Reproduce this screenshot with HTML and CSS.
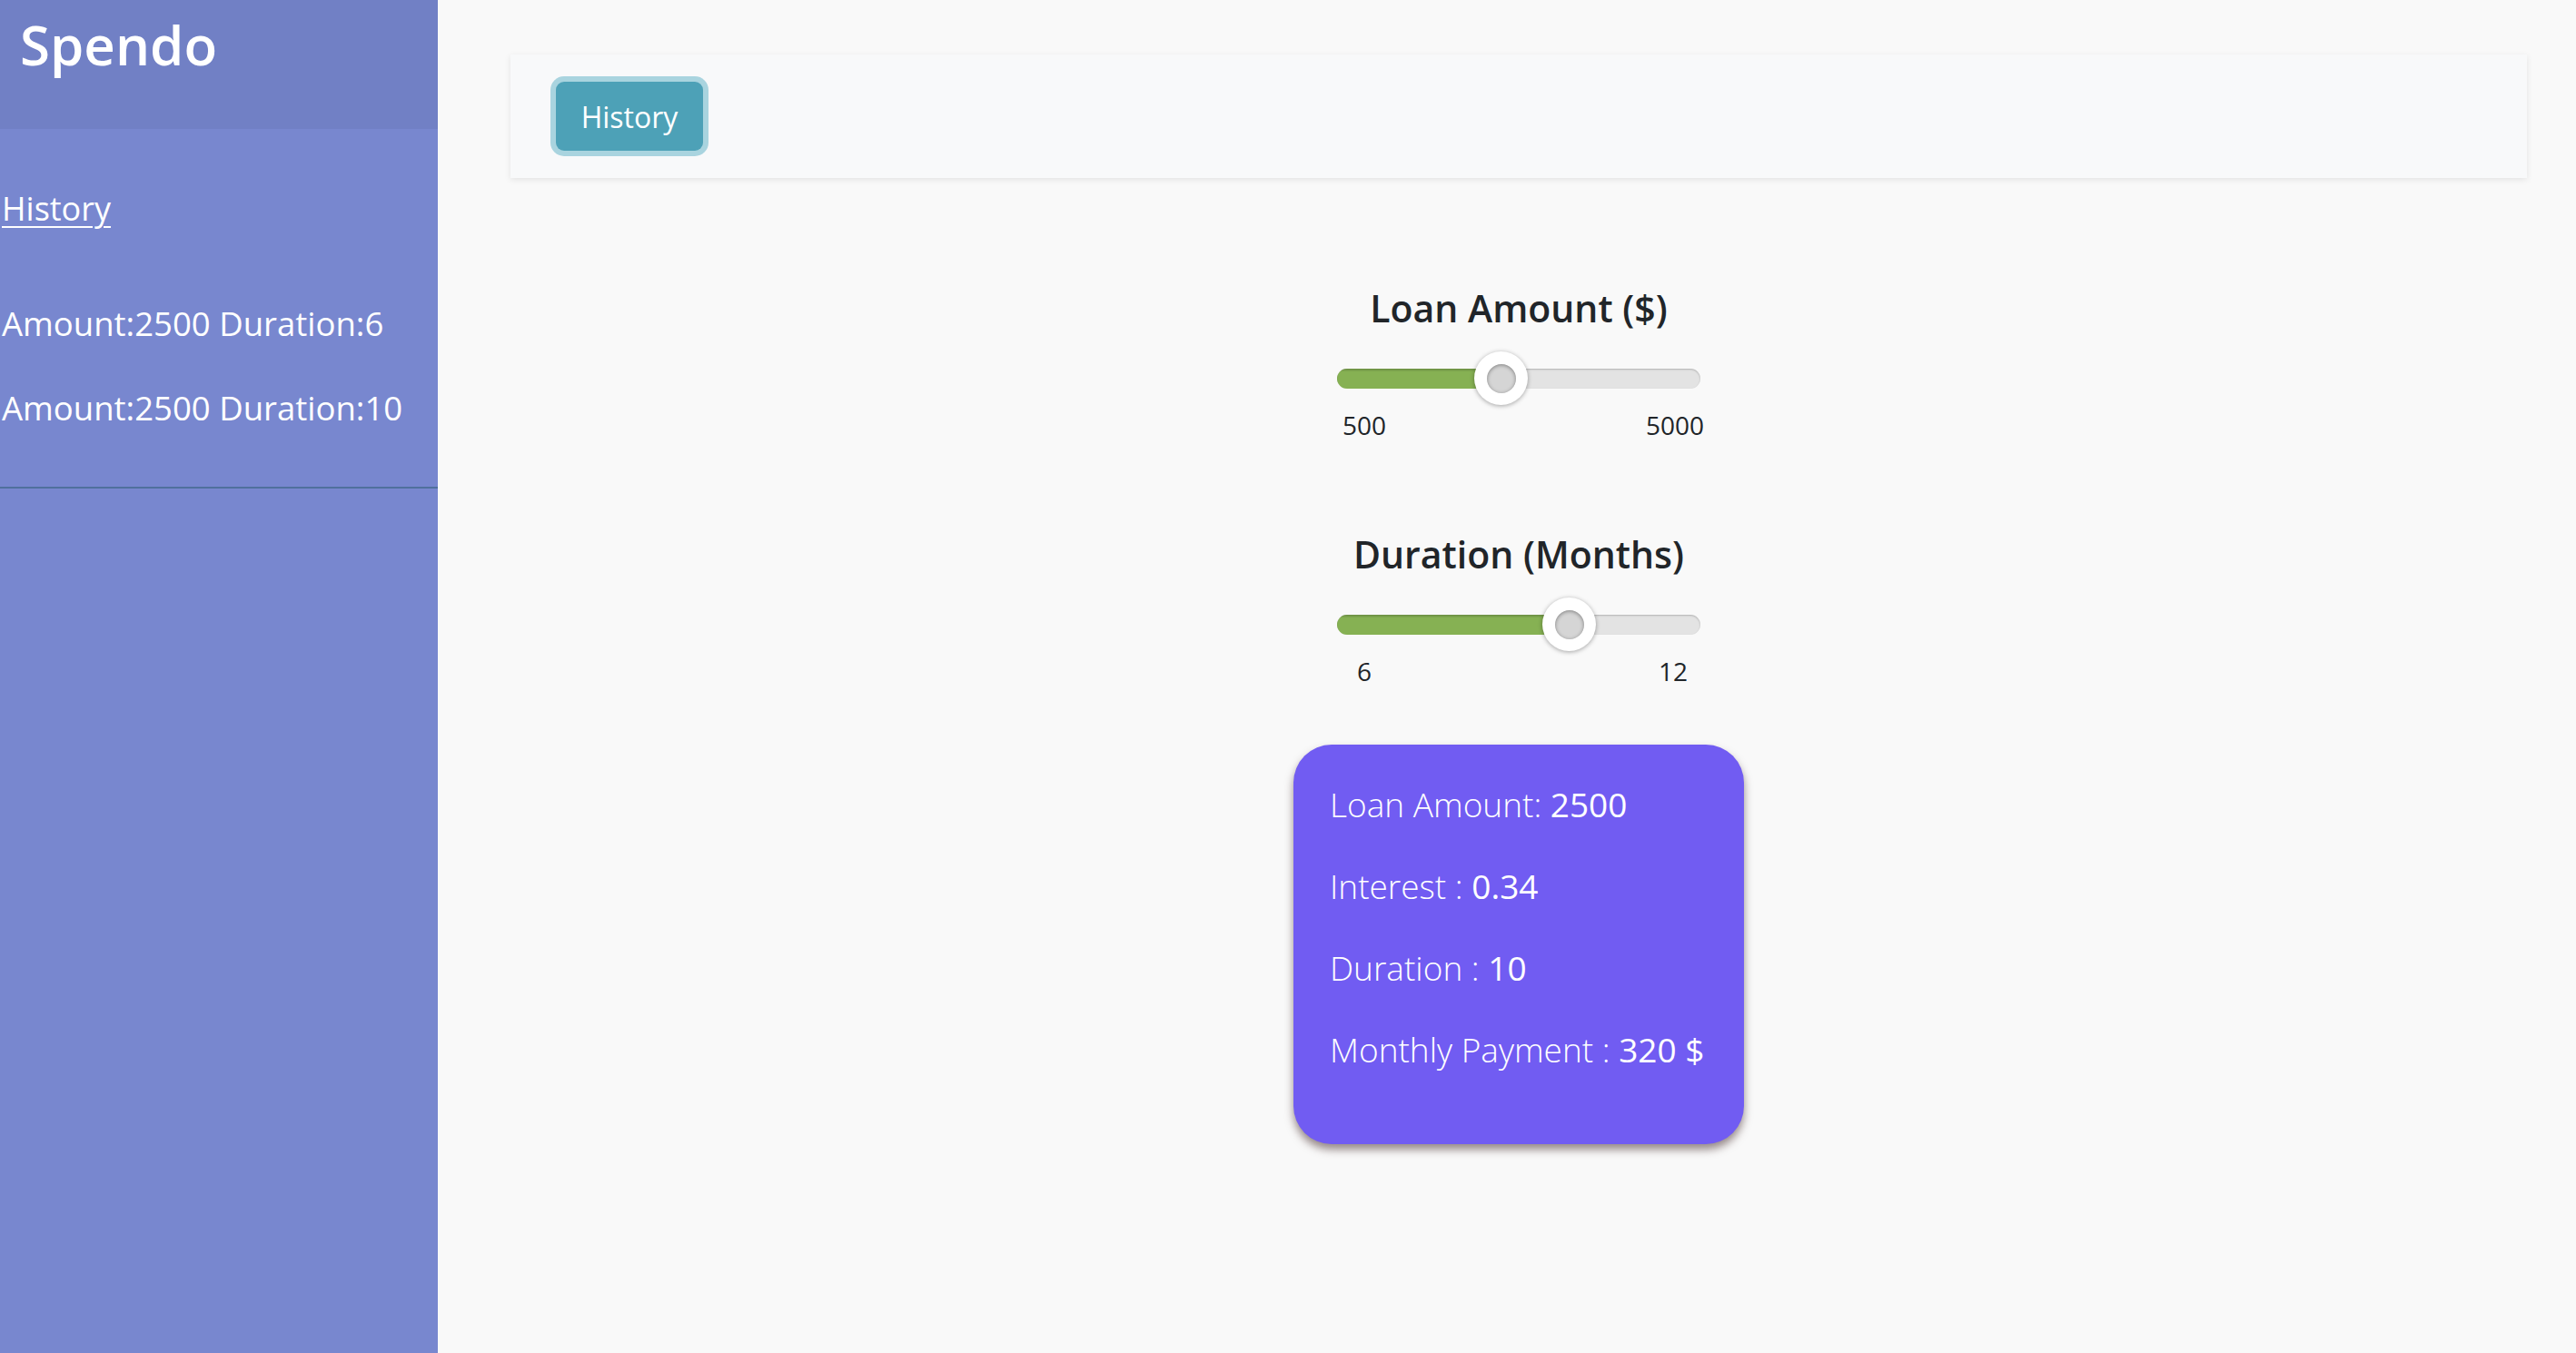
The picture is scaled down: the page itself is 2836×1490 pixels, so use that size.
FILE: index.html
```html
<!DOCTYPE html>
<html lang="en">
<head>
<meta charset="utf-8">
<title>Spendo</title>
<link rel="stylesheet" href="styles.css">
</head>
<body>
<div class="app">
  <aside class="sidebar">
    <div class="brand">Spendo</div>
    <nav class="side-nav">
      <a class="side-link" href="#">History</a>
      <ul class="history-list">
        <li class="history-item">Amount:2500 Duration:6</li>
        <li class="history-item">Amount:2500 Duration:10</li>
      </ul>
    </nav>
    <hr class="side-divider">
  </aside>
  <main class="main">
    <div class="topbar">
      <button class="btn-history" type="button">History</button>
    </div>
    <section class="calc">
      <div class="slider-group">
        <h2 class="slider-title">Loan Amount ($)</h2>
        <div class="slider">
          <div class="track"><div class="fill" style="width:181px"></div></div>
          <div class="thumb" style="left:151px"><span class="thumb-core"></span></div>
        </div>
        <div class="slider-labels"><span class="tick">500</span><span class="tick">5000</span></div>
      </div>
      <div class="slider-group">
        <h2 class="slider-title">Duration (Months)</h2>
        <div class="slider">
          <div class="track"><div class="fill" style="width:255px"></div></div>
          <div class="thumb" style="left:226px"><span class="thumb-core"></span></div>
        </div>
        <div class="slider-labels"><span class="tick">6</span><span class="tick">12</span></div>
      </div>
      <div class="result-card">
        <p class="result-line">Loan Amount: <span class="val">2500</span></p>
        <p class="result-line">Interest : <span class="val">0.34</span></p>
        <p class="result-line">Duration : <span class="val">10</span></p>
        <p class="result-line">Monthly Payment : <span class="val">320 $</span></p>
      </div>
    </section>
  </main>
</div>
</body>
</html>
```
FILE: styles.css
```css
* { box-sizing: border-box; }
html, body { margin: 0; padding: 0; height: 100%; }
body {
  font-family: "Open Sans", "Liberation Sans", sans-serif;
  background: #f9f9f9;
  color: #212529;
}
.app { display: flex; min-height: 100vh; }

.sidebar {
  width: 482px;
  flex: 0 0 482px;
  background: #7887cf;
  color: #fff;
}
.brand {
  height: 142px;
  background: #7180c5;
  padding: 9px 22px 0;
  font-size: 60px;
  line-height: 80px;
  font-weight: 600;
}
.side-nav { padding: 63px 0 0 2px; }
.side-link {
  display: block;
  color: #fff;
  font-size: 36px;
  line-height: 50px;
  text-decoration: underline;
  text-underline-offset: 6px;
  text-decoration-thickness: 2px;
}
.history-list { list-style: none; margin: 76px 0 0; padding: 0; }
.history-item { font-size: 36.5px; line-height: 50px; white-space: nowrap; }
.history-item + .history-item { margin-top: 43px; }
.side-divider {
  margin: 62px 0 0;
  border: 0;
  border-top: 2px solid #50709d;
  height: 0;
}

.main { flex: 1; padding: 60px 54px 0 80px; }
.topbar {
  height: 136px;
  background: #f8f9fa;
  box-shadow: 0 2px 7px rgba(0, 0, 0, 0.09);
  display: flex;
  align-items: center;
  padding-left: 50px;
}
.btn-history {
  width: 162px;
  height: 76px;
  border: 0;
  border-radius: 9px;
  background: #4da1b7;
  color: #fff;
  font-family: inherit;
  font-size: 32px;
  box-shadow: 0 0 0 6px #a9d4df;
  padding: 0;
}

.calc {
  display: flex;
  flex-direction: column;
  align-items: center;
  padding-top: 117px;
}
.slider-group { width: 400px; display: flex; flex-direction: column; align-items: stretch; }
.slider-group + .slider-group { margin-top: 99px; }
.slider-title {
  margin: 0;
  text-align: center;
  font-size: 41px;
  line-height: 52px;
  font-weight: 600;
  white-space: nowrap;
  color: #212529;
}
.slider { position: relative; height: 59px; margin-top: 22px; display: flex; align-items: center; }
.track {
  width: 100%;
  height: 22px;
  border-radius: 11px;
  background: #e3e3e3;
  box-shadow: inset 0 1px 2px rgba(0, 0, 0, 0.22);
  overflow: hidden;
}
.fill {
  height: 100%;
  background: #86b153;
  box-shadow: inset 0 2px 2px rgba(0, 0, 0, 0.18);
}
.thumb {
  position: absolute;
  top: 0;
  width: 59px;
  height: 59px;
  border-radius: 50%;
  background: #fff;
  box-shadow: 0 1px 5px rgba(0, 0, 0, 0.35);
  display: flex;
  align-items: center;
  justify-content: center;
}
.thumb-core {
  width: 32px;
  height: 32px;
  border-radius: 50%;
  background: #d5d5d5;
  box-shadow: inset 0 1px 4px rgba(0, 0, 0, 0.4);
}
.slider-labels { display: flex; justify-content: space-between; margin-top: 5px; }
.tick { width: 60px; text-align: center; font-size: 28px; line-height: 34px; color: #212529; }

.result-card {
  margin-top: 64px;
  width: 496px;
  height: 440px;
  background: #715cf2;
  border-radius: 42px;
  color: #fff;
  padding: 21px 40px 0;
  box-shadow: 0 6px 10px rgba(70, 45, 45, 0.55);
}
.result-line {
  margin: 0;
  font-size: 37px;
  line-height: 90px;
  font-weight: 300;
  white-space: nowrap;
}
.val { font-weight: 400; }
```
